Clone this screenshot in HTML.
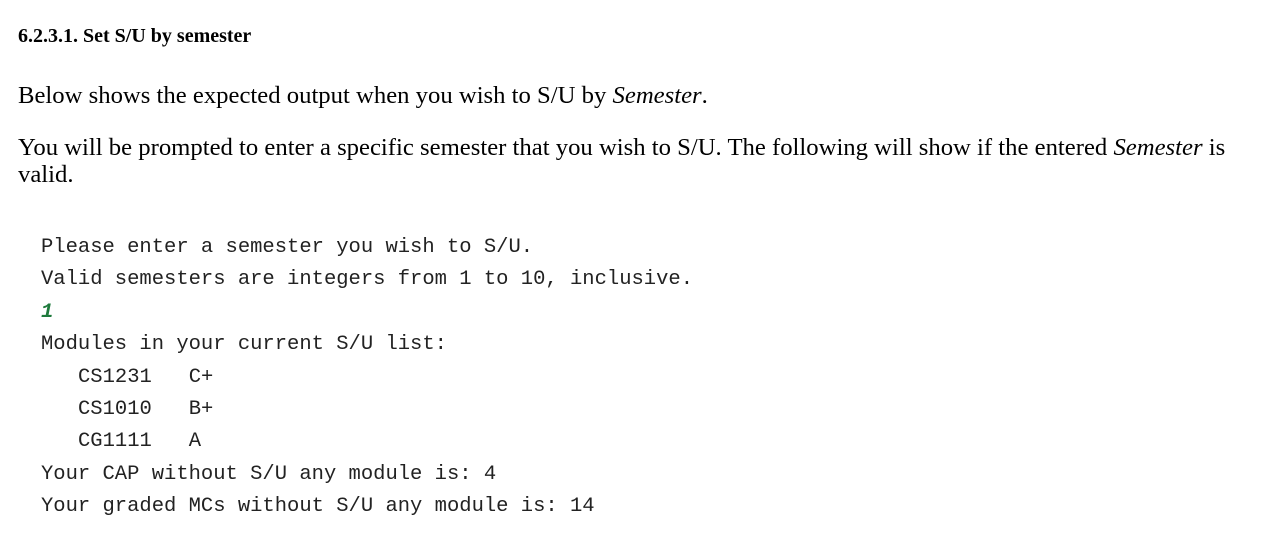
<!DOCTYPE html>
<html><head><style>
body{margin:0;background:#fff;width:1268px;height:542px;overflow:hidden;position:relative;font-family:"Liberation Serif",serif;color:#000}
.a{position:absolute;white-space:nowrap}
h4{position:absolute;left:18px;top:24px;margin:0;font-size:20px;font-weight:bold;line-height:24px}
.p{font-size:24.7px;line-height:26px}
.m{font-family:"Liberation Mono",monospace;font-size:20.5px;color:#222;line-height:24px}
</style></head><body>
<h4>6.2.3.1. Set S/U by semester</h4>
<div class="a p" style="left:18px;top:83px">Below shows the expected output when you wish to S/U by <i>Semester</i>.</div>
<div class="a p" style="left:18px;top:135px">You will be prompted to enter a specific semester that you wish to S/U. The following will show if the entered <i>Semester</i> is</div>
<div class="a p" style="left:18px;top:162px">valid.</div>
<div class="a m" style="left:41px;top:236px">Please enter a semester you wish to S/U.</div>
<div class="a m" style="left:41px;top:268px">Valid semesters are integers from 1 to 10, inclusive.</div>
<div class="a m" style="left:41px;top:301px;color:#1e7a3c;font-style:italic;font-weight:bold">1</div>
<div class="a m" style="left:41px;top:333px">Modules in your current S/U list:</div>
<div class="a m" style="left:78px;top:366px">CS1231&nbsp;&nbsp;&nbsp;C+</div>
<div class="a m" style="left:78px;top:398px">CS1010&nbsp;&nbsp;&nbsp;B+</div>
<div class="a m" style="left:78px;top:430px">CG1111&nbsp;&nbsp;&nbsp;A</div>
<div class="a m" style="left:41px;top:463px">Your CAP without S/U any module is: 4</div>
<div class="a m" style="left:41px;top:495px">Your graded MCs without S/U any module is: 14</div>
</body></html>
